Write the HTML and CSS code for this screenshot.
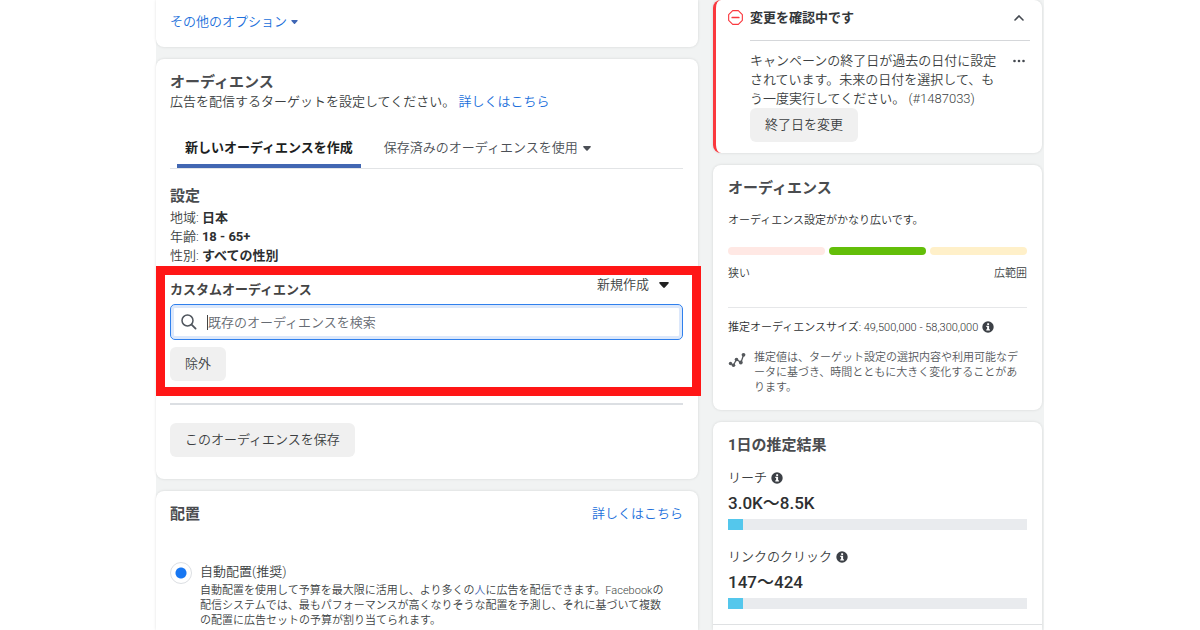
FILE: index.html
```html
<!DOCTYPE html>
<html lang="ja">
<head>
<meta charset="utf-8">
<title>広告セットの編集</title>
<link rel="stylesheet" href="styles.css">
</head>
<body>
<svg class="defs" width="0" height="0" aria-hidden="true">
  <symbol id="caret" viewBox="0 0 10 6"><path d="M1 0h8c.8 0 1.100.8.5 1.400L5.800 5.500a1.100 1.100 0 0 1-1.600 0L.5 1.400C-.1.8.200 0 1 0z" fill="currentColor"/></symbol>
  <symbol id="info" viewBox="0 0 12 12"><circle cx="6" cy="6" r="5.700" fill="currentColor"/><path d="M5.200 2.300h1.900v1.600H5.200zM4.300 4.800h2.800v3.500h.8v1.200H4.300V8.300h.8V6h-.8z" fill="#fff"/></symbol>
</svg>
<div class="page">
  <main class="column">
    <section class="card card-top">
      <a class="link" href="#">その他のオプション<svg class="caret-small"><use href="#caret"/></svg></a>
    </section>

    <section class="card">
      <h2 class="title">オーディエンス</h2>
      <p class="body">広告を配信するターゲットを設定してください。 <a class="link" href="#">詳しくはこちら</a></p>
      <div class="tabs" role="tablist">
        <button class="tab tab-active" role="tab" aria-selected="true">新しいオーディエンスを作成</button>
        <button class="tab" role="tab" aria-selected="false">保存済みのオーディエンスを使用<svg class="caret-tab"><use href="#caret"/></svg></button>
      </div>
      <h3 class="title settings-title">設定</h3>
      <ul class="settings">
        <li>地域: <strong>日本</strong></li>
        <li>年齢: <strong>18 - 65+</strong></li>
        <li>性別: <strong>すべての性別</strong></li>
      </ul>
      <div class="custom">
        <div class="custom-head">
          <label class="custom-label" for="search">カスタムオーディエンス</label>
          <button class="create">新規作成<svg class="caret-create"><use href="#caret"/></svg></button>
        </div>
        <div class="search">
          <svg class="search-icon" viewBox="0 0 16 16"><circle cx="6.500" cy="6.500" r="5.500" fill="none" stroke="currentColor" stroke-width="1.500"/><path d="M10.600 10.600l4 4" stroke="currentColor" stroke-width="1.800" stroke-linecap="round"/></svg>
          <input class="search-input" id="search" type="text" placeholder="既存のオーディエンスを検索">
        </div>
        <button class="button">除外</button>
      </div>
      <hr class="rule">
      <button class="button">このオーディエンスを保存</button>
    </section>

    <section class="card card-last">
      <div class="row">
        <h2 class="title">配置</h2>
        <a class="link" href="#">詳しくはこちら</a>
      </div>
      <div class="option">
        <input class="radio" type="radio" id="auto" name="placement" checked>
        <div>
          <label class="option-label" for="auto">自動配置(推奨)</label>
          <p class="small">自動配置を使用して予算を最大限に活用し、より多くの<a class="person" href="#">人</a>に広告を配信できます。Facebookの<br>配信システムでは、最もパフォーマンスが高くなりそうな配置を予測し、それに基づいて複数<br>の配置に広告セットの予算が割り当てられます。</p>
        </div>
      </div>
    </section>
  </main>

  <aside class="column">
    <section class="card alert">
      <svg class="alert-icon" viewBox="0 0 16 16"><path d="M5 .7h6L15.300 5v6L11 15.300H5L.7 11V5z" fill="none" stroke="currentColor" stroke-width="1.200" stroke-linejoin="round"/><path d="M4.500 8h7" stroke="currentColor" stroke-width="1.800" stroke-linecap="round"/></svg>
      <div class="alert-main">
        <div class="alert-head">
          <h2 class="alert-title">変更を確認中です</h2>
          <button class="icon-button" aria-label="閉じる"><svg width="10" height="6" viewBox="0 0 10 6"><path d="M1 5l4-4 4 4" fill="none" stroke="currentColor" stroke-width="1.600" stroke-linecap="round"/></svg></button>
        </div>
        <div class="alert-body">
          <p class="body">キャンペーンの終了日が過去の日付に設定<br>されています。未来の日付を選択して、も<br>う一度実行してください。 (#1487033)</p>
          <button class="icon-button" aria-label="その他"><svg width="12" height="4" viewBox="0 0 12 4"><g fill="currentColor"><circle cx="1.500" cy="2" r="1.300"/><circle cx="6" cy="2" r="1.300"/><circle cx="10.500" cy="2" r="1.300"/></g></svg></button>
        </div>
        <button class="button">終了日を変更</button>
      </div>
    </section>

    <section class="card size-card">
      <h2 class="title">オーディエンス</h2>
      <p class="small breadth">オーディエンス設定がかなり広いです。</p>
      <div class="meter"><span class="narrow"></span><span class="good"></span><span class="broad"></span></div>
      <div class="row small"><span>狭い</span><span>広範囲</span></div>
      <p class="small estimate">推定オーディエンスサイズ: 49,500,000 - 58,300,000<svg class="info"><use href="#info"/></svg></p>
      <div class="note">
        <svg class="trend" viewBox="0 0 18 16"><path d="M2.500 11.500L5.500 13 8.500 7.500 13 10.500 15.500 3" fill="none" stroke="currentColor" stroke-width="1.300"/><g fill="currentColor"><circle cx="2.500" cy="11.500" r="1.700"/><circle cx="5.500" cy="13.200" r="1.800"/><circle cx="8.500" cy="7.500" r="1.800"/><circle cx="12.800" cy="10.500" r="1.900"/><circle cx="15.500" cy="2.800" r="1.900"/></g></svg>
        <p class="small">推定値は、ターゲット設定の選択内容や利用可能なデ<br>ータに基づき、時間とともに大きく変化することがあ<br>ります。</p>
      </div>
    </section>

    <section class="card card-last results">
      <h2 class="title">1日の推定結果</h2>
      <div class="metric">
        <p class="body">リーチ<svg class="info"><use href="#info"/></svg></p>
        <p class="value">3.0K～8.5K</p>
        <div class="bar"><div class="fill" style="width:5%"></div></div>
      </div>
      <div class="metric">
        <p class="body">リンクのクリック<svg class="info"><use href="#info"/></svg></p>
        <p class="value">147～424</p>
        <div class="bar"><div class="fill" style="width:5%"></div></div>
      </div>
      <hr class="results-end">
    </section>
  </aside>
</div>
</body>
</html>
```
FILE: styles.css
```css
* { box-sizing: border-box; }

body {
  margin: 0;
  height: 100vh;
  overflow: hidden;
  background: #fff;
  color: #3c3f42;
  font-family: Roboto, "Noto Sans CJK JP", sans-serif;
  font-size: 13px;
  font-weight: 350;
  line-height: 19px;
}

h2, h3, p, ul { margin: 0; padding: 0; }
ul { list-style: none; }
button, input { font: inherit; color: inherit; margin: 0; }
button { border: 0; background: none; padding: 0; cursor: pointer; white-space: nowrap; }
.defs { position: absolute; }

.page {
  display: grid;
  grid-template-columns: 542fr 329fr;
  gap: 15px;
  max-width: 888px;
  min-height: 100vh;
  margin: 0 auto;
  padding-right: 2px;
  background: #f1f3f3;
}

.column { display: flex; flex-direction: column; gap: 12px; min-width: 0; }

.card {
  padding: 13px 15px 22px 14px;
  background: #fff;
  border-radius: 8px;
  box-shadow: 0 0 3px rgba(0, 0, 0, 0.12);
}
.card-top { padding: 12px 14px 16px; border-radius: 0 0 8px 8px; }
.card-last { flex: 1; border-radius: 8px 8px 0 0; padding-bottom: 0; }

.title { font-size: 15px; line-height: 20px; font-weight: 700; color: #4a4c4f; }
.row { display: flex; justify-content: space-between; }
.small { font-size: 11px; line-height: 15px; white-space: nowrap; }
.link { color: #216fdb; text-decoration: none; }

.caret-small { width: 7px; height: 4px; margin-left: 4px; vertical-align: 2px; color: #3f66b5; }
.caret-tab { width: 8px; height: 5px; margin-left: 5px; vertical-align: 1px; }
.caret-create { width: 10px; height: 6px; margin-left: 10px; vertical-align: 1px; color: #222; }

.tabs {
  display: flex;
  gap: 15px;
  margin-top: 19px;
  padding-left: 7px;
  border-bottom: 1px solid #e2e4e6;
}
.tab { padding: 8px 8px 7px; border-bottom: 4px solid transparent; color: #4b4f56; }
.tab-active { border-color: #4267b2; color: #1c1e21; font-weight: 700; }

.settings-title { margin: 17px 0 2px; }
.settings strong { font-weight: 700; color: #2d2f31; }

.custom { position: relative; margin-top: 10px; }
.custom::after {
  content: "";
  position: absolute;
  inset: -9px -18px -15px -14px;
  border: 9px solid #ff1616;
  pointer-events: none;
}
.custom-head { display: flex; justify-content: space-between; height: 29px; }
.custom-label { padding-top: 5px; font-weight: 700; color: #444; }
.create { align-self: flex-start; padding-right: 14px; }

.search {
  display: flex;
  align-items: center;
  height: 36px;
  margin-bottom: 7px;
  padding-left: 10px;
  border: 1px solid #2f80ed;
  border-radius: 5px;
  box-shadow: inset 0 0 0 3px #dce8fb;
}
.search-icon { width: 16px; height: 16px; margin-right: 10px; color: #50565e; }
.search-input {
  flex: 1;
  min-width: 0;
  height: 15px;
  border: 0;
  border-left: 1px solid #444;
  outline: 0;
  padding: 0;
  background: none;
}
.search-input::placeholder { color: #656a72; opacity: 1; }

.button {
  display: block;
  height: 34px;
  padding: 0 15px 2px;
  border-radius: 6px;
  background: #f0f0f0;
}

.rule { margin: 22px 0 18px; border: 0; border-top: 2px solid #dcdfe3; }

.option { display: flex; gap: 8px; margin-top: 38px; }
.radio {
  appearance: none;
  flex: none;
  width: 22px;
  height: 22px;
  border: 1px solid #dcdfe3;
  border-radius: 50%;
  background: radial-gradient(circle, #1877f2 5px, #fff 6px);
}
.option-label { display: block; margin-bottom: 2px; }
.person { color: #4267b2; text-decoration: none; }

.alert {
  display: flex;
  gap: 7px;
  padding: 8px 12px 11px;
  border-left: 3px solid #fa383e;
}
.alert-icon { flex: none; width: 15px; height: 15px; margin-top: 2px; color: #fa383e; }
.alert-main { flex: 1; min-width: 0; }
.alert-head {
  display: flex;
  justify-content: space-between;
  padding-bottom: 12px;
  border-bottom: 1px solid #d5d7da;
}
.alert-title { font-size: 13px; line-height: 20px; font-weight: 700; color: #333639; }
.alert-body { display: flex; justify-content: space-between; padding-top: 10px; }
.alert .body { white-space: nowrap; }
.icon-button { display: flex; align-items: center; justify-content: center; width: 22px; height: 20px; color: #444950; }

.size-card { padding: 13px 15px 15px; }
.breadth { margin: 15px 0 19px; color: #2d2f31; }
.meter { display: grid; grid-template-columns: repeat(3, 1fr); gap: 4px; margin-bottom: 11px; }
.meter span { height: 8px; border-radius: 4px; }
.narrow { background: #ffe8e4; }
.good { background: #63be09; }
.broad { background: #fff0c9; }
.estimate { margin-top: 26px; padding: 12px 0 15px; border-top: 1px solid #e6e7e9; color: #2d2f31; }
.info { width: 12px; height: 12px; margin-left: 4px; vertical-align: -2px; color: #3c4046; }
.note { display: flex; gap: 8px; color: #55585c; }
.trend { flex: none; width: 18px; height: 16px; margin-top: 2px; }

.results { padding: 13px 15px 0; }
.metric { margin: 13px 0 17px; }
.metric + .metric { margin-bottom: 15px; }
.value { margin: 6px 0; font-size: 17px; line-height: 20px; font-weight: 500; color: #2d2f31; }
.bar { height: 11px; background: #e9ebee; }
.fill { height: 100%; background: #54c7ec; }
.results-end { margin: 0 -15px; border: 0; border-top: 1px solid #dfe1e3; }
```
